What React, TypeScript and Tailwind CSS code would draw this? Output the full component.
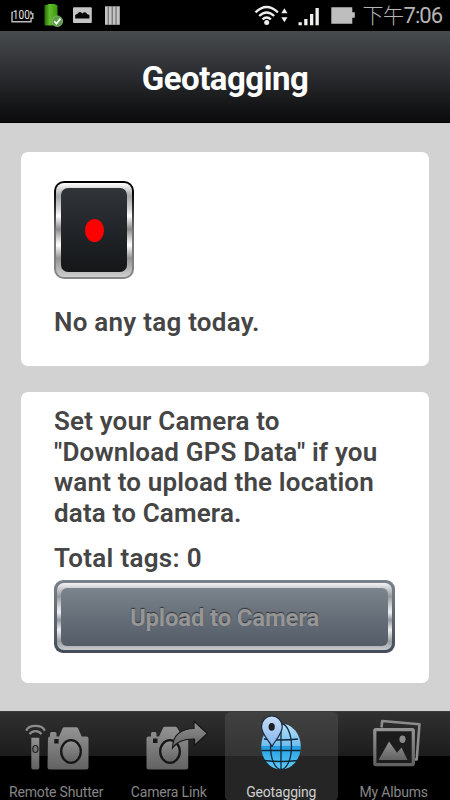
import type { ReactNode } from 'react';

interface Tab {
  label: string;
  icon: ReactNode;
  active?: boolean;
}

function RemoteShutterIcon() {
  return (
    <svg className="w-[112px] h-[66px]" viewBox="0 0 112 66" fill="url(#metal)">
      <g fill="none" stroke="#8b8b8b" strokeWidth="2.2">
        <path d="M26.2 18.7C29 12.3 42 12.3 44.8 18.7" />
        <path d="M29.600 22.300C32 18.100 39 18.100 41.400 22.300" />
      </g>
      <path d="M31.300 25.800h8v30q0 1.800-1.800 1.800h-4.400q-1.800 0-1.800-1.800z" />
      <ellipse cx="35.400" cy="37" rx="2.600" ry="3.500" fill="#777" stroke="#222" strokeWidth="1.200" />
      <path d="M48 26.500q0-2 2-2v-3q0-1.500 1.500-1.500h3.500q1.500 0 1.500 1.500v3h2.500l3.500-8q.5-1.200 2-1.200h11.500q1.500 0 2.200 1.200l3.500 8h4.800q2 0 2 2V55q0 2.500-2.500 2.500h-36q-2.500 0-2.500-2.500z" />
      <rect x="54.300" y="27" width="4.300" height="4.500" fill="#181818" />
      <ellipse cx="71" cy="39.500" rx="9.800" ry="11.400" fill="url(#metal)" stroke="#161616" strokeWidth="2.300" />
    </svg>
  );
}

function CameraLinkIcon() {
  return (
    <svg className="w-[112px] h-[66px]" viewBox="0 0 112 66" fill="url(#metal)">
      <path d="M33.500 26.500q0-2 2-2h2.500v-3q0-1.500 1.500-1.500h2.500q1.500 0 1.500 1.500v3h2.500l4-8.500q.5-1.200 2-1.200h10q1.500 0 2.200 1.200l4 6.500h7V55q0 2.500-2.500 2.500h-36.700q-2.500 0-2.500-2.500z" />
      <rect x="40" y="26.500" width="4.500" height="4.500" fill="#181818" />
      <ellipse cx="57" cy="39.500" rx="9.800" ry="11.400" fill="url(#metal)" stroke="#161616" strokeWidth="2.300" />
      <path d="M59.500 36C59.500 23 68.500 16.500 81 16.500V9.200L94.300 21.500 81.500 33.500V27C70 26.800 63.500 30 59.500 36z" stroke="#161616" strokeWidth="1.200" />
    </svg>
  );
}

function GeotaggingIcon() {
  return (
    <svg className="w-[112px] h-[66px]" viewBox="0 0 112 66">
      <ellipse cx="56" cy="34.500" rx="19.800" ry="23" fill="url(#globe)" />
      <g fill="none" stroke="#102839" strokeWidth="1.300">
        <path d="M56 12v45.500M36.500 38.500h39M39 27q17 2 34 0M39 48.500q17 2 34 0" />
        <ellipse cx="56" cy="34.500" rx="10.500" ry="23" />
      </g>
      <path d="M47 34.500C44 28.500 36.500 22 36.500 15 36.500 8.500 41 4 46.800 4S57.200 8.500 57.200 15C57.200 22 50 28.500 47 34.500z" fill="url(#pin)" stroke="#1b2a3b" strokeWidth="1.200" />
      <ellipse cx="46.700" cy="14.800" rx="3.100" ry="3.900" fill="#1d1f24" />
    </svg>
  );
}

function AlbumsIcon() {
  return (
    <svg className="w-[112px] h-[66px]" viewBox="0 0 112 66">
      <path d="M43.500 15.500L44.200 9 81.500 12.200 78.700 47.500H76.500" fill="none" stroke="#8c8c8c" strokeWidth="2.600" strokeLinejoin="round" />
      <rect x="36.800" y="17.600" width="38.500" height="35" rx="1" fill="#1c1c1c" stroke="url(#metal)" strokeWidth="3.200" />
      <path d="M40.600 48L51 29.500l8 11.200 4.500-5.300 6 12.600z" fill="url(#metal)" />
      <ellipse cx="64.500" cy="27.300" rx="3.100" ry="3.800" fill="#8b8b8b" />
    </svg>
  );
}

const tabs: Tab[] = [
  { label: 'Remote Shutter', icon: <RemoteShutterIcon /> },
  { label: 'Camera Link', icon: <CameraLinkIcon /> },
  { label: 'Geotagging', icon: <GeotaggingIcon />, active: true },
  { label: 'My Albums', icon: <AlbumsIcon /> },
];

function StatusBar() {
  return (
    <div className="h-[31px] shrink-0 bg-black flex items-center justify-between pl-[11px] pr-[8px]">
      <svg className="w-[112px] h-[31px]" viewBox="0 0 112 31">
        {/* Battery percentage */}
        <path d="M2 12.500H1v9.200h19v-3.400h1.800v-4.600H20V12h-1" fill="none" stroke="#bbb" strokeWidth="1.400" />
        <text x="1.800" y="18.800" fill="#e2e2e2" fontSize="13.500" fontFamily="Roboto, sans-serif" textLength="17" lengthAdjust="spacingAndGlyphs">100</text>
        {/* Charged battery */}
        <path d="M33.500 6q0-1 1-1h2V4h8v1h1q1 0 1 1V24.500q0 1-1 1h-11q-1 0-1-1z" fill="url(#charge)" />
        <circle cx="46.300" cy="21.200" r="5.300" fill="#58a046" stroke="#91bb83" strokeWidth=".8" />
        <path d="M43.300 21.200l2.200 2.400 4-5" fill="none" stroke="#fff" strokeWidth="1.700" />
        {/* Picture */}
        <rect x="62" y="7.300" width="18.800" height="15.700" rx="1" fill="#c5c5c5" />
        <path d="M64.200 18.500v-3.500q2-1 3.500-2.500 1.700-1.100 3.500 1 2-1.700 3.500-1 1.800 2 3.700 2.500v3.500z" fill="#050505" />
        <path d="M94 6.300h14.800v18.500H94z" fill="#c5c5c5" />
        <path d="M97.200 6.300v18.500M101.200 6.300v18.500M105 6.300v18.500" stroke="#4f4f4f" strokeWidth=".9" />
      </svg>
      <div className="flex items-center">
        <svg className="w-[110px] h-[31px]" viewBox="0 0 110 31" fill="#eee">
          <g fill="none" stroke="#eee" strokeWidth="2.300">
            <path d="M3.500 12.300q11.200-10.500 22.400 0" />
            <path d="M7.200 16q7.500-7 15 0" />
            <path d="M10.500 19.400q4.200-3.900 8.400 0" />
          </g>
          <circle cx="14.700" cy="22.500" r="2.500" />
          <path d="M29.300 13.200l3.100-5 3.100 5zM29.300 17.300l3.100 5 3.100-5z" />
          <path d="M46.500 22.300h3.300v3h-3.300zM52.200 19h3.300v6.300h-3.300zM58 14h3.300v11.300H58zM63.500 8h3.300v17.300h-3.300z" />
          <path d="M79.300 7.300h21v5h2.500v5.500h-2.500v6h-21z" fill="#bebebe" />
        </svg>
        <span className="w-[80px] pt-px whitespace-nowrap text-right text-[22px] leading-[30px] tracking-[-1px] text-[#b5b5b5] font-['Roboto','Noto_Sans_CJK_TC',sans-serif]">
          <span className="text-[21px] font-light tracking-[-0.5px]">下午</span>7:06
        </span>
      </div>
    </div>
  );
}

export default function App() {
  return (
    <div className="relative w-[450px] h-[800px] overflow-hidden flex flex-col bg-[#d2d2d2] font-['Roboto',sans-serif]">
      {/* Shared gradients */}
      <svg className="absolute w-0 h-0">
        <defs>
          <linearGradient id="metal" x1="0" y1="0" x2="0" y2="1">
            <stop stopColor="#939393" />
            <stop offset="1" stopColor="#626262" />
          </linearGradient>
          <linearGradient id="globe" x1="0" y1="0" x2="0" y2="1">
            <stop stopColor="#b9e2fb" />
            <stop offset=".48" stopColor="#6fbdef" />
            <stop offset=".5" stopColor="#219ce0" />
            <stop offset="1" stopColor="#63cdfa" />
          </linearGradient>
          <linearGradient id="pin" x1="0" y1="0" x2="0" y2="1">
            <stop stopColor="#c6dcf6" />
            <stop offset="1" stopColor="#81b4ee" />
          </linearGradient>
          <linearGradient id="charge">
            <stop stopColor="#256d0b" />
            <stop offset=".4" stopColor="#63bd2c" />
            <stop offset="1" stopColor="#39960d" />
          </linearGradient>
        </defs>
      </svg>

      <StatusBar />

      {/* Header */}
      <header className="h-[92px] shrink-0 flex items-center justify-center border-b border-black bg-linear-to-b from-[#494c4e] via-[#292b2e] to-[#0b0b0c]">
        <h1 className="mt-[5px] text-[33px] leading-[40px] font-bold tracking-[-0.5px] text-white">Geotagging</h1>
      </header>

      <main className="flex-1 flex flex-col gap-[26px] px-[21px] pt-[29px]">
        {/* Recording */}
        <section className="h-[214px] rounded-[7px] bg-white pl-[33px] pt-[29px]">
          <button className="block w-[80px] h-[98px] rounded-[10px] bg-linear-to-b from-black via-[#707070] to-[#888] p-[2px]">
            <span className="flex w-full h-full rounded-[8px] bg-[linear-gradient(180deg,#fff_0%,#a5a5a5_14%,#d8d8d8_28%,#fff_35%,#8b8b8b_49%,#e7e7e7_62%,#fff_66%,#929292_80%,#d0d0d0_100%)] p-[5px]">
              <span className="flex w-full h-full items-center justify-center rounded-[7px] bg-linear-to-b from-[#30353a] to-[#151719]">
                <span className="w-[19px] h-[23px] rounded-[50%] bg-[#fd0000]" />
              </span>
            </span>
          </button>
          <p className="mt-[28px] whitespace-nowrap text-[26px] leading-[31px] font-semibold tracking-[0.25px] text-[#454545]">No any tag today.</p>
        </section>

        {/* Upload */}
        <section className="h-[291px] rounded-[7px] bg-white pl-[33px] pt-[14px]">
          <p className="text-[26px] leading-[30.5px] font-semibold tracking-[0.16px] text-[#454545]">
            <span className="block whitespace-nowrap">Set your Camera to</span>
            <span className="block whitespace-nowrap">"Download GPS Data" if you</span>
            <span className="block whitespace-nowrap">want to upload the location</span>
            <span className="block whitespace-nowrap">data to Camera.</span>
          </p>
          <p className="mt-[15px] whitespace-nowrap text-[26px] leading-[31px] font-semibold tracking-[0.3px] text-[#454545]">Total tags: 0</p>
          <button className="mt-[6px] block w-[341px] h-[73px] rounded-[9px] bg-linear-to-b from-[#7b828a] to-[#424d59] p-[3px]">
            <span className="flex w-full h-full rounded-[7px] bg-[linear-gradient(180deg,#f3f3f5_0%,#c9cbce_9%,#969a9f_20%,#d8dadc_36%,#f0f0f2_44%,#92969c_55%,#f0f0f0_70%,#999da2_87%,#c8cacd_100%)] px-[4px] pt-[5px] pb-[4px]">
              <span className="flex w-full h-full items-center justify-center rounded-[6px] bg-linear-to-b from-[#7b838c] to-[#535c67]">
                <span className="mt-px whitespace-nowrap text-[24px] leading-[30px] font-bold tracking-[-0.2px] text-[#969696] [text-shadow:0_-1px_1px_#303338]">Upload to Camera</span>
              </span>
            </span>
          </button>
        </section>
      </main>

      {/* Tab bar */}
      <nav className="h-[89px] shrink-0 grid grid-cols-4 border-t border-[#3b3b3b] bg-[linear-gradient(180deg,#303030_0px,#1c1c1c_44px,#000_44px)]">
        {tabs.map((tab) => (
          <button
            key={tab.label}
            className={`flex flex-col items-center ${tab.active ? 'rounded-[5px] bg-[linear-gradient(180deg,#414141_0px,#343434_44px,#252525_44px)] text-[#d0d0d0]' : 'text-[#868686]'}`}
          >
            {tab.icon}
            <span className="mt-[5px] whitespace-nowrap text-[14px] leading-[18px] tracking-[-0.18px]">{tab.label}</span>
          </button>
        ))}
      </nav>
    </div>
  );
}
